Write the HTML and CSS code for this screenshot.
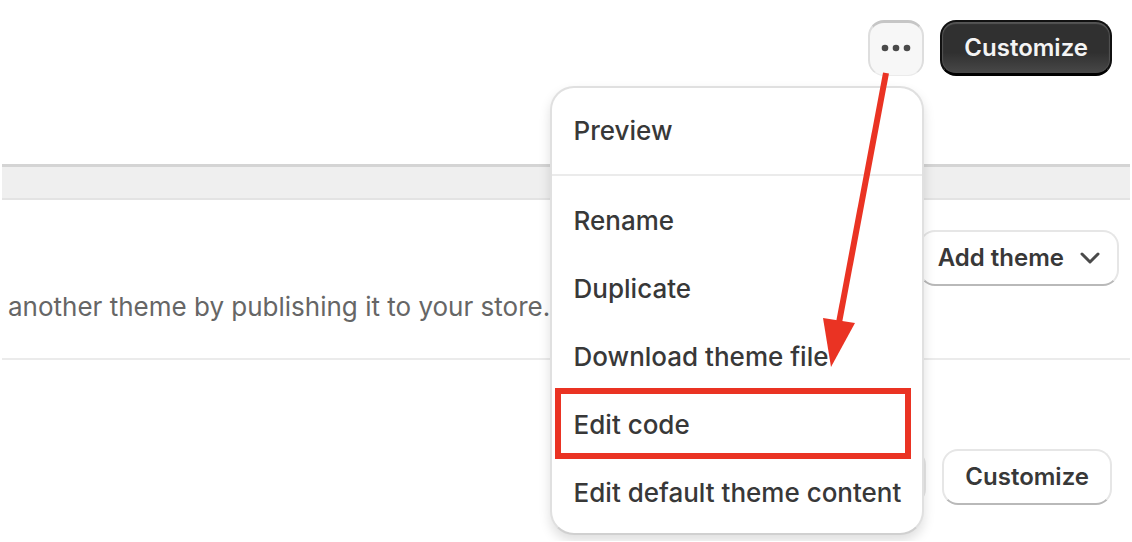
FILE: index.html
```
<!DOCTYPE html>
<html lang="en">
<head>
    <meta charset="UTF-8">
    <title>Themes</title>
    <link rel="stylesheet" href="styles.css">
</head>
<body>
<header class="current-theme">
    <div class="actions">
        <div class="menu-wrap">
            <button type="button" class="btn btn-more" aria-label="More actions" aria-expanded="true">
                <svg width="30" height="8" viewBox="0 0 30 8" fill="#4a4a4a">
                    <circle cx="4" cy="4" r="3.3"/>
                    <circle cx="15" cy="4" r="3.3"/>
                    <circle cx="26" cy="4" r="3.3"/>
                </svg>
            </button>
            <div class="menu">
                <div class="menu-section">
                    <button type="button" class="menu-item">Preview</button>
                </div>
                <div class="menu-section">
                    <button type="button" class="menu-item">Rename</button>
                    <button type="button" class="menu-item">Duplicate</button>
                    <button type="button" class="menu-item">Download theme file</button>
                    <button type="button" class="menu-item highlighted">Edit code</button>
                    <button type="button" class="menu-item">Edit default theme content</button>
                </div>
            </div>
            <svg class="arrow" width="80" height="300" viewBox="0 0 80 300" aria-hidden="true">
                <path d="M68 1L20 256" stroke="#ea3323" stroke-width="6" fill="none"/>
                <path d="M5 246L37 251L13 295Z" fill="#ea3323"/>
            </svg>
        </div>
        <button type="button" class="btn btn-primary">Customize</button>
    </div>
</header>
<main class="library">
    <div class="library-header">
        <button type="button" class="btn btn-add">
            Add theme
            <svg width="20" height="12" viewBox="0 0 20 12" fill="none" stroke="#4a4a4a" stroke-width="3" stroke-linecap="round" stroke-linejoin="round">
                <path d="M2 2L10 10L18 2"/>
            </svg>
        </button>
        <p class="library-text">another theme by publishing it to your store.</p>
    </div>
    <div class="theme-row">
        <button type="button" class="btn btn-more-plain" aria-label="Theme actions"></button>
        <button type="button" class="btn">Customize</button>
    </div>
</main>
</body>
</html>
```

FILE: styles.css
```
* {
    box-sizing: border-box;
}

body {
    margin: 0;
    padding: 0 2px;
    font-family: Inter, sans-serif;
    font-size: 26px;
    line-height: 32px;
    color: #383838;
    background-color: #fff;
}

button {
    font: inherit;
    color: inherit;
    cursor: pointer;
}

.current-theme {
    padding: 20px 18px 88px;
    border-bottom: 3px solid #d4d4d4;
}

.actions {
    display: flex;
    justify-content: flex-end;
    gap: 16px;
}

.btn {
    display: flex;
    align-items: center;
    justify-content: center;
    height: 56px;
    padding: 0 21px;
    border: 2px solid #e6e6e6;
    border-bottom: 2px solid #b9b9b9;
    border-radius: 16px;
    background-color: #fff;
    font-size: 24px;
    font-weight: 600;
}

.btn-primary {
    padding: 0 22px;
    color: #f4f4f4;
    border: 2px solid #111;
    border-bottom: 3px solid #000;
    background: linear-gradient(#303030 60%, #484848);
    box-shadow: inset 0 2px 1px #555, inset 1px 0 1px #555, inset -1px 0 1px #555;
}

.btn-more {
    width: 56px;
    padding: 0 0 2px;
    border: 2px solid #dedede;
    border-top: 3px solid #c6c6c6;
    border-bottom: 1px solid #ebebeb;
    background-color: #f7f7f7;
}

.btn-more-plain {
    width: 56px;
}

.menu-wrap {
    position: relative;
}

.menu {
    position: absolute;
    top: 66px;
    right: 0;
    z-index: 1;
    border: 2px solid #e0e0e0;
    border-bottom-color: #d0d0d0;
    border-radius: 24px;
    background-color: #fff;
    box-shadow: 0 6px 12px rgba(0, 0, 0, 0.13);
}

.menu-section {
    padding: 9px 0;
}

.menu-section + .menu-section {
    padding: 11px 0 6px;
    border-top: 2px solid #ebebeb;
}

.menu-item {
    display: block;
    position: relative;
    width: 100%;
    padding: 18px 21px 18px 22px;
    border: 0;
    background: none;
    font-weight: 450;
    text-align: left;
    white-space: nowrap;
}

.highlighted::after {
    content: "";
    position: absolute;
    top: -3px;
    bottom: 0;
    left: 3px;
    right: 11px;
    border: 6px solid #ea3323;
}

.arrow {
    position: absolute;
    top: 52px;
    right: 26px;
    z-index: 2;
    pointer-events: none;
}

.library {
    border-top: 31px solid #efefef;
}

.library-header {
    padding: 30px 11px 35px 6px;
    border-top: 2px solid #e3e3e3;
    border-bottom: 2px solid #ebebeb;
}

.btn-add {
    gap: 16px;
    margin-left: auto;
    padding: 0 17px;
}

.library-text {
    margin: 5px 0 0;
    color: #666;
}

.theme-row {
    display: flex;
    justify-content: flex-end;
    gap: 16px;
    padding: 89px 18px 36px;
}
```
